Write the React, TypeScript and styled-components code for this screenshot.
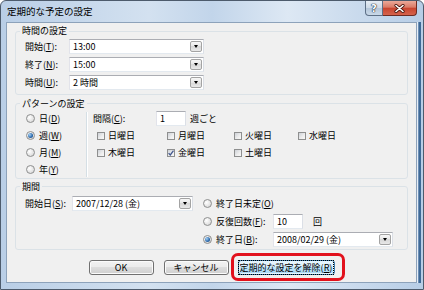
import { FC, ReactNode } from 'react';
import styled, { createGlobalStyle, css } from 'styled-components';

const GlobalStyle = createGlobalStyle`
  html, body {
    margin: 0;
    padding: 0;
    background: #ffffff;
  }
  body {
    font-family: "Noto Sans CJK JP", "Noto Sans", sans-serif;
    font-size: 9px;
    color: #000000;
  }
  * {
    box-sizing: border-box;
  }
`;

const Window = styled.div`
  width: 424px;
  height: 290px;
  display: flex;
  flex-direction: column;
  border: 1px solid #4d5b6c;
  border-radius: 6px 6px 0 0;
  background: linear-gradient(90deg, #b9cee6 0%, #d3e1f0 35%, #c2d5ea 50%, #dde8f4 68%, #b7cde6 100%);
  overflow: hidden;
`;

const TitleBar = styled.div`
  height: 21px;
  display: flex;
  align-items: flex-start;
  padding-left: 6px;
`;

const Title = styled.span`
  font-size: 9.5px;
  line-height: 20px;
`;

const Captions = styled.div`
  margin-left: auto;
  margin-right: 6px;
  display: flex;
`;

const HelpButton = styled.div`
  width: 18px;
  height: 15px;
  border: 1px solid #5d6f86;
  border-top: none;
  border-radius: 0 0 0 4px;
  background: linear-gradient(#e6edf5 0%, #cdd9e6 50%, #b3c5d9 50%, #c9d8e8 100%);
  display: flex;
  align-items: center;
  justify-content: center;
  color: #ffffff;
  font: bold 10px "DejaVu Sans", sans-serif;
  text-shadow: 0 0 1px #1d2a3a, 0 0 1px #1d2a3a, 0 0 1px #1d2a3a;
`;

const CloseButton = styled.div`
  width: 34px;
  height: 15px;
  border: 1px solid #6e2b22;
  border-top: none;
  border-left: none;
  border-radius: 0 0 4px 0;
  background: linear-gradient(#eaa999 0%, #da7a66 45%, #c8432e 50%, #d5634c 100%);
  display: flex;
  align-items: center;
  justify-content: center;
`;

const Client = styled.div`
  flex: 1;
  margin: 0 6px 6px 5px;
  background: #f0f0f0;
  border: 1px solid #8da2ba;
  box-shadow: 1px 0 0 #e6eef7, 2px 0 0 #6d8fb6, 4px 0 0 #3f6996;
  display: flex;
  flex-direction: column;
`;

const Group = styled.fieldset<{ $top: number }>`
  margin: ${({ $top }) => $top}px 8px 0 8px;
  padding: 0;
  min-width: 0;
  border: 1px solid #dbe2e7;
  border-radius: 3px;
`;

const Legend = styled.legend<{ $lh?: number }>`
  margin-left: 4px;
  padding: 0 2px;
  line-height: ${({ $lh }) => $lh ?? 13}px;
`;

const TimeBody = styled.div`
  display: grid;
  grid-template-columns: 44px 135px;
  grid-auto-rows: 15px;
  row-gap: 3px;
  align-items: center;
  padding: 1px 9px 4px 9px;
`;

const FieldLabel = styled.span<{ $w?: number }>`
  line-height: 13px;
  white-space: nowrap;
  ${({ $w }) => $w && css`width: ${$w}px; flex: none;`}
`;

const Field = styled.div<{ $w: number }>`
  width: ${({ $w }) => $w}px;
  height: 15px;
  flex: none;
  display: flex;
  align-items: center;
  background: #ffffff;
  border: 1px solid;
  border-color: #abadb3 #dbdfe6 #e3e9ef #e2e3ea;
  padding: 0 1px 0 3px;
  line-height: 13px;
  white-space: nowrap;
`;

const FieldText = styled.span`
  flex: 1;
`;

const DropButton = styled.span`
  width: 12px;
  height: 11px;
  border: 1px solid #a3a3a3;
  border-radius: 2px;
  background: linear-gradient(#f7f7f7 0%, #e6e6e6 50%, #d8d8d8 50%, #e8e8e8 100%);
  display: flex;
  align-items: center;
  justify-content: center;

  &::before {
    content: '';
    border-left: 2.5px solid transparent;
    border-right: 2.5px solid transparent;
    border-top: 3px solid #000000;
  }
`;

const PatternBody = styled.div`
  display: flex;
`;

const RecurList = styled.div`
  width: 70px;
  padding-left: 10px;
  display: grid;
  grid-auto-rows: 17px;
  align-items: center;
`;

const Divider = styled.div`
  width: 2px;
  margin: 2px 0 1px;
  border-left: 1px solid #d5dfe5;
  border-right: 1px solid #ffffff;
`;

const WeekPane = styled.div`
  padding-left: 5px;
  display: flex;
  flex-direction: column;
`;

const IntervalRow = styled.div`
  height: 17px;
  display: flex;
  align-items: center;
`;

const Unit = styled.span<{ $gap: number }>`
  margin-left: ${({ $gap }) => $gap}px;
  line-height: 13px;
`;

const DayGrid = styled.div`
  padding-left: 4px;
  display: grid;
  grid-template-columns: 70px 67px 64px auto;
  grid-auto-rows: 17px;
  align-items: center;
`;

const Option = styled.label<{ $gap?: number }>`
  display: flex;
  align-items: center;
  gap: ${({ $gap }) => $gap ?? 4}px;
  line-height: 13px;
  white-space: nowrap;
`;

const RadioMark = styled.span<{ $on?: boolean }>`
  width: 9px;
  height: 9px;
  flex: none;
  border-radius: 50%;
  border: 1px solid #8e8f8f;
  background: radial-gradient(circle at 35% 35%, #ffffff 0%, #e8e8e8 50%, #cfcfcf 100%);
  display: flex;
  align-items: center;
  justify-content: center;

  ${({ $on }) =>
    $on &&
    css`
      &::after {
        content: '';
        width: 5px;
        height: 5px;
        border-radius: 50%;
        background: radial-gradient(circle at 35% 35%, #a6d2f5 0%, #2c68aa 60%, #1a4b82 100%);
      }
    `}
`;

const CheckMark = styled.span`
  width: 8px;
  height: 8px;
  flex: none;
  border: 1px solid #8e8f8f;
  background: linear-gradient(135deg, #cdd1d7 0%, #eeeeee 60%, #f8f8f8 100%);
  display: flex;
  align-items: center;
  justify-content: center;
`;

const PeriodBody = styled.div`
  display: flex;
  align-items: flex-start;
  padding: 1px 0 1px 9px;
`;

const StartRow = styled.div`
  height: 18px;
  display: flex;
  align-items: center;
`;

const EndGrid = styled.div`
  margin-left: 10px;
  display: grid;
  grid-template-columns: 70px auto;
  grid-auto-rows: 18px;
  align-items: center;
`;

const Count = styled.div`
  display: flex;
  align-items: center;
`;

const ButtonRow = styled.div`
  margin-top: 10px;
  display: flex;
  justify-content: center;
  gap: 10px;
`;

const Button = styled.button<{ $w: number; $focused?: boolean }>`
  position: relative;
  width: ${({ $w }) => $w}px;
  height: 15px;
  padding: 0;
  font: inherit;
  color: #000000;
  line-height: 13px;
  border: 1px solid #707070;
  border-radius: 3px;
  background: linear-gradient(#f2f2f2 0%, #ebebeb 50%, #dddddd 50%, #cfcfcf 100%);
  box-shadow: inset 0 0 0 1px #fbfbfb;

  ${({ $focused }) =>
    $focused &&
    css`
      margin-left: -1px;
      border-color: #3c7fb1;
      background: linear-gradient(#eaf6fd 0%, #d9f0fc 50%, #bee6fd 50%, #a7d9f5 100%);
      box-shadow: inset 0 0 0 1px #e5f5fd;

      &::after {
        content: '';
        position: absolute;
        top: -8px;
        bottom: -7px;
        left: -8px;
        right: -11px;
        border: 3px solid #e2111c;
        border-radius: 7px;
        pointer-events: none;
      }
    `}
`;

const FocusText = styled.span`
  outline: 1px dotted #000000;
  outline-offset: 0;
  padding: 0 1px;
`;

const Combo: FC<{ w: number; value: string }> = ({ w, value }) => (
  <Field $w={w}>
    <FieldText>{value}</FieldText>
    <DropButton />
  </Field>
);

const Radio: FC<{ on?: boolean; children: ReactNode }> = ({ on, children }) => (
  <Option>
    <RadioMark $on={on} />
    <span>{children}</span>
  </Option>
);

const Check: FC<{ on?: boolean; children: ReactNode }> = ({ on, children }) => (
  <Option $gap={3}>
    <CheckMark>
      {on && (
        <svg width="6" height="6" viewBox="0 0 6 6">
          <path d="M0.6 3.1 L2.3 5 L5.5 0.6" fill="none" stroke="#44598f" strokeWidth="1.3" />
        </svg>
      )}
    </CheckMark>
    <span>{children}</span>
  </Option>
);

export default function App() {
  return (
    <>
      <GlobalStyle />
      <Window>
        <TitleBar>
          <Title>定期的な予定の設定</Title>
          <Captions>
            <HelpButton>?</HelpButton>
            <CloseButton>
              <svg width="11" height="9" viewBox="0 0 11 9">
                <path d="M2 1.5 L9 7.5 M9 1.5 L2 7.5" stroke="#4a1810" strokeWidth="3.2" strokeLinecap="round" />
                <path d="M2 1.5 L9 7.5 M9 1.5 L2 7.5" stroke="#ffffff" strokeWidth="1.6" strokeLinecap="round" />
              </svg>
            </CloseButton>
          </Captions>
        </TitleBar>
        <Client>
          <Group $top={1}>
            <Legend $lh={14}>時間の設定</Legend>
            <TimeBody>
              <FieldLabel>開始(<u>T</u>):</FieldLabel>
              <Combo w={135} value="13:00" />
              <FieldLabel>終了(<u>N</u>):</FieldLabel>
              <Combo w={135} value="15:00" />
              <FieldLabel>時間(<u>U</u>):</FieldLabel>
              <Combo w={135} value="2 時間" />
            </TimeBody>
          </Group>

          <Group $top={2}>
            <Legend>パターンの設定</Legend>
            <PatternBody>
              <RecurList>
                <Radio>日(<u>D</u>)</Radio>
                <Radio on>週(<u>W</u>)</Radio>
                <Radio>月(<u>M</u>)</Radio>
                <Radio>年(<u>Y</u>)</Radio>
              </RecurList>
              <Divider />
              <WeekPane>
                <IntervalRow>
                  <FieldLabel $w={63}>間隔(<u>C</u>):</FieldLabel>
                  <Field $w={30}>1</Field>
                  <Unit $gap={4}>週ごと</Unit>
                </IntervalRow>
                <DayGrid>
                  <Check>日曜日</Check>
                  <Check>月曜日</Check>
                  <Check>火曜日</Check>
                  <Check>水曜日</Check>
                  <Check>木曜日</Check>
                  <Check on>金曜日</Check>
                  <Check>土曜日</Check>
                </DayGrid>
              </WeekPane>
            </PatternBody>
          </Group>

          <Group $top={1}>
            <Legend>期間</Legend>
            <PeriodBody>
              <StartRow>
                <FieldLabel $w={47}>開始日(<u>S</u>):</FieldLabel>
                <Combo w={121} value="2007/12/28 (金)" />
              </StartRow>
              <EndGrid>
                <Radio>終了日未定(<u>O</u>)</Radio>
                <span />
                <Radio>反復回数(<u>F</u>):</Radio>
                <Count>
                  <Field $w={30}>10</Field>
                  <Unit $gap={10}>回</Unit>
                </Count>
                <Radio on>終了日(<u>B</u>):</Radio>
                <Combo w={120} value="2008/02/29 (金)" />
              </EndGrid>
            </PeriodBody>
          </Group>

          <ButtonRow>
            <Button $w={65}>OK</Button>
            <Button $w={65}>キャンセル</Button>
            <Button $w={97} $focused>
              <FocusText>定期的な設定を解除(<u>R</u>)</FocusText>
            </Button>
          </ButtonRow>
        </Client>
      </Window>
    </>
  );
}
